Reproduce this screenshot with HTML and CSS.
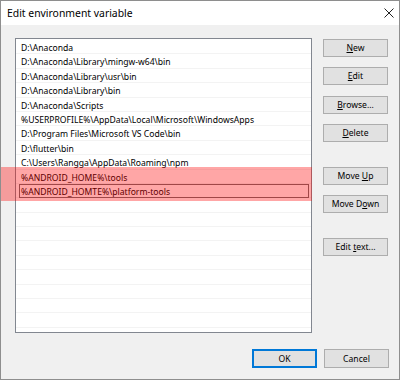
FILE: index.html
```html
<!DOCTYPE html>
<html lang="en">
<head>
<meta charset="UTF-8">
<title>Edit environment variable</title>
<link rel="stylesheet" href="styles.css">
</head>
<body>

  <div class="window">
    <div class="titlebar">
      <span class="title">Edit environment variable</span>
      <svg class="close" width="10" height="10" viewBox="0 0 10 10"><path d="M0.5 0.5 L9.5 9.5 M9.5 0.5 L0.5 9.5" stroke="#222" stroke-width="1" fill="none"/></svg>
    </div>

    <div class="content">
      <div class="main">
        <div class="list">
          <div class="row">D:\Anaconda</div>
          <div class="row">D:\Anaconda\Library\mingw-w64\bin</div>
          <div class="row">D:\Anaconda\Library\usr\bin</div>
          <div class="row">D:\Anaconda\Library\bin</div>
          <div class="row">D:\Anaconda\Scripts</div>
          <div class="row">%USERPROFILE%\AppData\Local\Microsoft\WindowsApps</div>
          <div class="row">D:\Program Files\Microsoft VS Code\bin</div>
          <div class="row">D:\flutter\bin</div>
          <div class="row">C:\Users\Rangga\AppData\Roaming\npm</div>
          <div class="row">%ANDROID_HOME%\tools</div>
          <div class="row selected"><span>%ANDROID_HOMTE%\platform-tools</span></div>
          <div class="row"></div>
          <div class="row"></div>
          <div class="row"></div>
          <div class="row"></div>
          <div class="row"></div>
          <div class="row"></div>
          <div class="row"></div>
          <div class="row"></div>
          <div class="row"></div>
        </div>

        <div class="side">
          <div class="group">
            <button><u>N</u>ew</button>
            <button><u>E</u>dit</button>
            <button><u>B</u>rowse...</button>
            <button><u>D</u>elete</button>
          </div>
          <div class="group">
            <button>Move <u>U</u>p</button>
            <button>Move D<u>o</u>wn</button>
          </div>
          <div class="group">
            <button>Edit <u>t</u>ext...</button>
          </div>
        </div>
      </div>

      <div class="footer">
        <button class="default">OK</button>
        <button>Cancel</button>
      </div>
    </div>

    <div class="mark"></div>
  </div>

</body>
</html>
```

FILE: styles.css
```css
body { margin: 0; background: #fff; font-family: "Noto Sans", "Open Sans", sans-serif; color: #000; }

.window { position: relative; width: 400px; height: 380px; box-sizing: border-box; border: 1px solid #8e8e8e; background: #f0f0f0; overflow: hidden; }

.titlebar { height: 24px; background: #fff; display: flex; align-items: center; justify-content: space-between; padding: 0 5px 0 6px; }
.title { font-size: 10.4px; color: #000; }
.close { display: block; }

.content { padding: 13px 10px 0 14px; }
.main { display: flex; gap: 11px; }

.list { width: 297px; height: 295px; box-sizing: border-box; border: 1px solid #828790; background: #fff; padding-top: 1px; overflow: hidden; }
.row { height: 14.4px; box-sizing: border-box; border-bottom: 1px solid #f3f3f3; padding: 2px 0 0 5px; font-size: 8.6px; line-height: 12.4px; white-space: nowrap; }
.row.selected { padding: 0 2px 0 3px; }
.row.selected span { display: block; height: 14px; box-sizing: border-box; border: 1px solid #6e6e6e; padding: 2px 0 0 1px; line-height: 10px; }

.side { display: flex; flex-direction: column; padding-top: 1px; }
.group { display: flex; flex-direction: column; gap: 10.3px; }
.group + .group { margin-top: 25px; }

button { display: block; width: 65px; height: 18px; box-sizing: border-box; padding: 0; background: #e1e1e1; border: 1px solid #adadad; font-family: "Noto Sans", "Open Sans", sans-serif; font-size: 8.6px; color: #000; }
u { text-decoration-thickness: 1px; text-underline-offset: 1px; }

.footer { display: flex; justify-content: flex-end; gap: 7px; margin-top: 16px; }
.footer button { height: 19px; }
.footer button.default { border: 2px solid #0078d7; }

/* annotation over the two android rows */
.mark { position: absolute; left: -1px; top: 166px; width: 312px; height: 34px; background: rgba(255, 0, 0, 0.35); pointer-events: none; }
```
